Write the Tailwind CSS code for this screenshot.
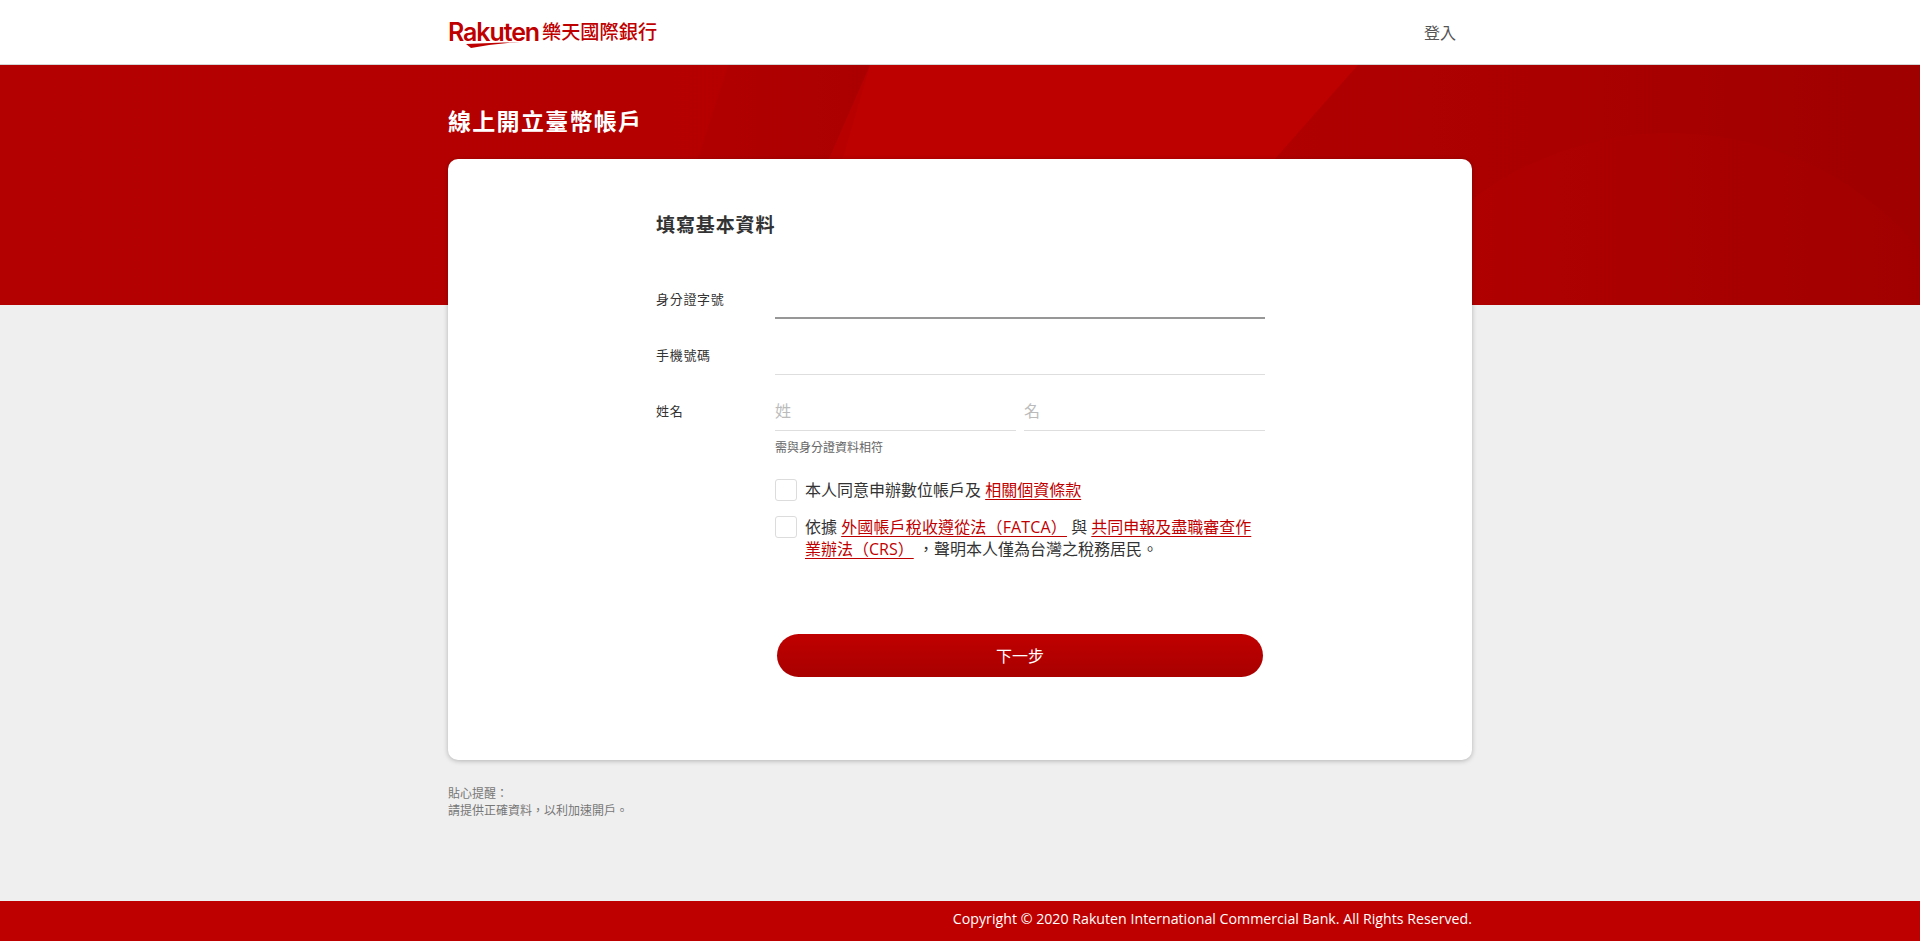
<!doctype html>
<html lang="zh-Hant">
<head>
<meta charset="utf-8">
<title>線上開立臺幣帳戶</title>
<script src="https://cdn.jsdelivr.net/npm/@tailwindcss/browser@4"></script>
</head>
<body class="bg-[#efefef] font-['Open_Sans','Noto_Sans_CJK_TC',sans-serif] text-[#333]">
<div class="relative flex min-h-screen flex-col overflow-hidden">
  <header class="h-[65px] border-b border-[#d5d5d5] bg-white">
    <div class="mx-auto flex h-full w-[1024px] items-center justify-between pr-4">
      <a class="flex items-start text-[#bf0000]">
        <span class="relative block h-[30px] w-[90px]">
          <span class="block font-['Inter',sans-serif] text-[25px] leading-[30px] font-semibold tracking-[-1.1px]">Rakuten</span>
          <svg class="absolute top-[25px] left-[18px]" width="54" height="6" viewBox="0 0 54 6"><path d="M0 2 L54 0 Q28 1.5 5 6 Z" fill="#bf0000"/></svg>
        </span>
        <span class="ml-[4px] text-[19.2px] leading-[30px] font-medium">樂天國際銀行</span>
      </a>
      <a class="pt-px text-base text-[#555]">登入</a>
    </div>
  </header>

  <div class="absolute top-[65px] left-0 h-[240px] w-full overflow-hidden bg-[linear-gradient(90deg,#b30000_0%,#b50000_35%,#bd0000_60%,#b00000_66%,#ab0000_80%,#9f0000_100%)]">
    <svg class="absolute inset-0" width="1920" height="240" viewBox="0 0 1920 240">
      <defs>
        <linearGradient id="w" x1="0" x2="1" y1="0" y2="0"><stop offset="0" stop-color="#b30000"/><stop offset="1" stop-color="#ab0000"/></linearGradient>
        <linearGradient id="c" x1="0" x2="1" y1="0" y2="0"><stop offset="0" stop-color="#b40000"/><stop offset="1" stop-color="#9f0000"/></linearGradient>
      </defs>
      <polygon points="728,0 870,0 765,240 650,240" fill="url(#w)"/>
      <polygon points="870,0 1358,0 1146,240 800,240" fill="#bd0000"/>
      <circle cx="1670" cy="395" r="327" fill="url(#c)"/>
    </svg>
  </div>

  <main class="relative mx-auto w-[1024px] flex-1">
    <h1 class="pt-[40px] text-[23px] leading-[32px] font-bold tracking-[1.3px] text-white">線上開立臺幣帳戶</h1>
    <section class="mt-[22px] h-[601px] rounded-[10px] bg-white pt-[53px] pl-[208px] shadow-[0_1px_5px_rgba(0,0,0,0.25)]">
      <h2 class="text-[19px] leading-[26px] font-bold tracking-[0.9px] text-[#333]">填寫基本資料</h2>
      <div class="mt-[25px] w-[609px]">
        <div class="flex h-[56px]">
          <label class="w-[119px] pt-[26px] text-[13px] leading-[20px] tracking-[0.7px]">身分證字號</label>
          <div class="w-[490px] border-b-2 border-[#979797]"></div>
        </div>
        <div class="flex h-[56px]">
          <label class="w-[119px] pt-[26px] text-[13px] leading-[20px] tracking-[0.7px]">手機號碼</label>
          <div class="w-[490px] border-b border-[#dedede]"></div>
        </div>
        <div class="flex h-[56px]">
          <label class="w-[119px] pt-[26px] text-[13px] leading-[20px] tracking-[0.7px]">姓名</label>
          <div class="flex w-[490px] gap-2">
            <div class="flex-1 border-b border-[#dedede] pt-[25px] text-base leading-[22px] text-[#bbb]">姓</div>
            <div class="flex-1 border-b border-[#dedede] pt-[25px] text-base leading-[22px] text-[#bbb]">名</div>
          </div>
        </div>
        <p class="mt-[8px] ml-[119px] text-xs leading-[18px] text-[#666]">需與身分證資料相符</p>
        <div class="mt-[22px] ml-[119px] flex w-[490px] items-start">
          <span class="h-[22px] w-[22px] shrink-0 rounded-[3px] border border-[#dcdcdc] bg-white"></span>
          <p class="ml-[8px] text-base leading-[22px]">本人同意申辦數位帳戶及 <a class="text-[#bf0000] underline underline-offset-[3px]">相關個資條款</a></p>
        </div>
        <div class="mt-[15px] ml-[119px] flex w-[490px] items-start">
          <span class="h-[22px] w-[22px] shrink-0 rounded-[3px] border border-[#dcdcdc] bg-white"></span>
          <p class="ml-[8px] w-[456px] text-base leading-[22px]">依據 <a class="tracking-[0.15px] text-[#bf0000] underline underline-offset-[3px]">外國帳戶稅收遵從法（FATCA）</a> 與 <a class="text-[#bf0000] underline underline-offset-[3px]">共同申報及盡職審查作業辦法（CRS）</a> ，聲明本人僅為台灣之稅務居民。</p>
        </div>
        <button class="mt-[74px] ml-[121px] h-[43px] w-[486px] rounded-full bg-linear-to-b from-[#c00000] to-[#a80000] text-base text-white">下一步</button>
      </div>
    </section>
    <p class="mt-[25px] text-xs leading-[17px] text-[#777]">貼心提醒：<br>請提供正確資料，以利加速開戶。</p>
  </main>

  <footer class="flex h-[40px] items-center bg-[#bf0000] pb-[4px] text-white">
    <div class="mx-auto w-[1024px] text-right text-[14.2px]">Copyright © 2020 Rakuten International Commercial Bank. All Rights Reserved.</div>
  </footer>
</div>
</body>
</html>
